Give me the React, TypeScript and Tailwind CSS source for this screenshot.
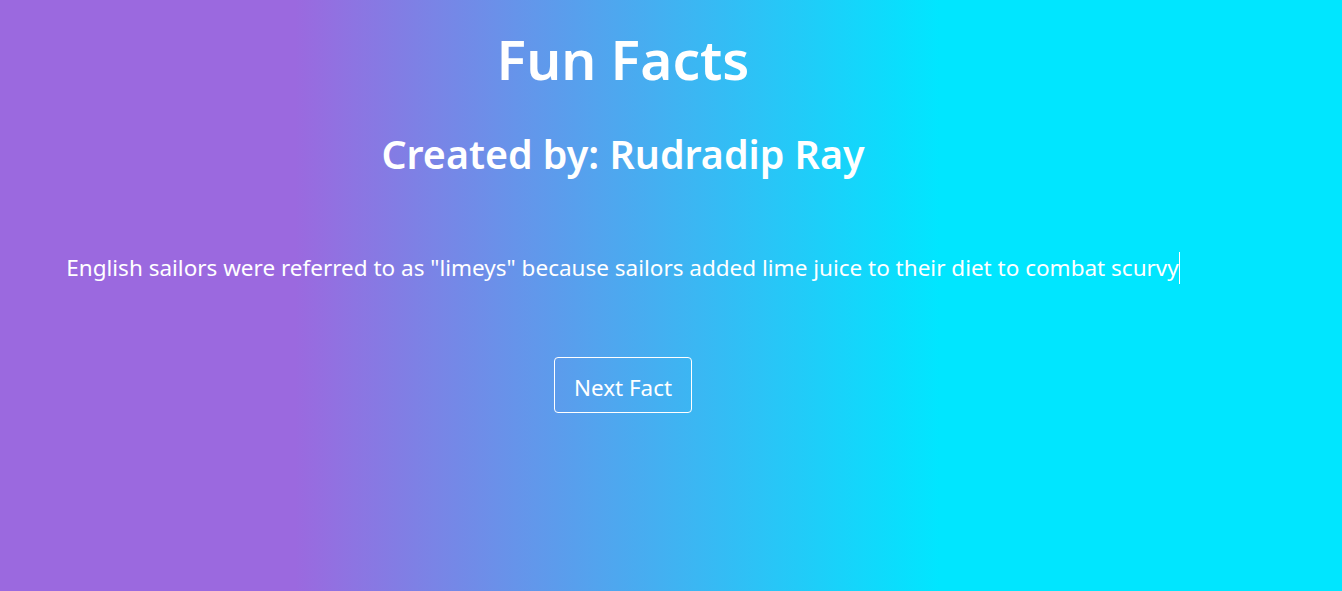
export default function App() {
  return (
    <div
      className="min-h-[591px] w-full bg-[linear-gradient(90deg,#9b69df_22%,#00e6ff_70%)] text-white"
      style={{ fontFamily: '"Noto Sans", "Open Sans", sans-serif' }}
    >
      <div className="w-[1246px] flex flex-col items-center text-center">
        <h1 className="mt-[20px] text-[55px] leading-[78px] font-semibold">Fun Facts</h1>
        <h2 className="mt-[29px] text-[39.4px] leading-[54px] font-semibold">Created by: Rudradip Ray</h2>
        <p className="mt-[71px] text-[22.5px] leading-[32px]">
          English sailors were referred to as "limeys" because sailors added lime juice to their diet to combat scurvy
          <span className="inline-block w-px h-[32px] align-top bg-white" />
        </p>
        <button className="mt-[73px] h-[56px] px-[19px] pt-[5px] border border-white rounded-[4px] text-[22.4px] text-white">
          Next Fact
        </button>
      </div>
    </div>
  );
}
